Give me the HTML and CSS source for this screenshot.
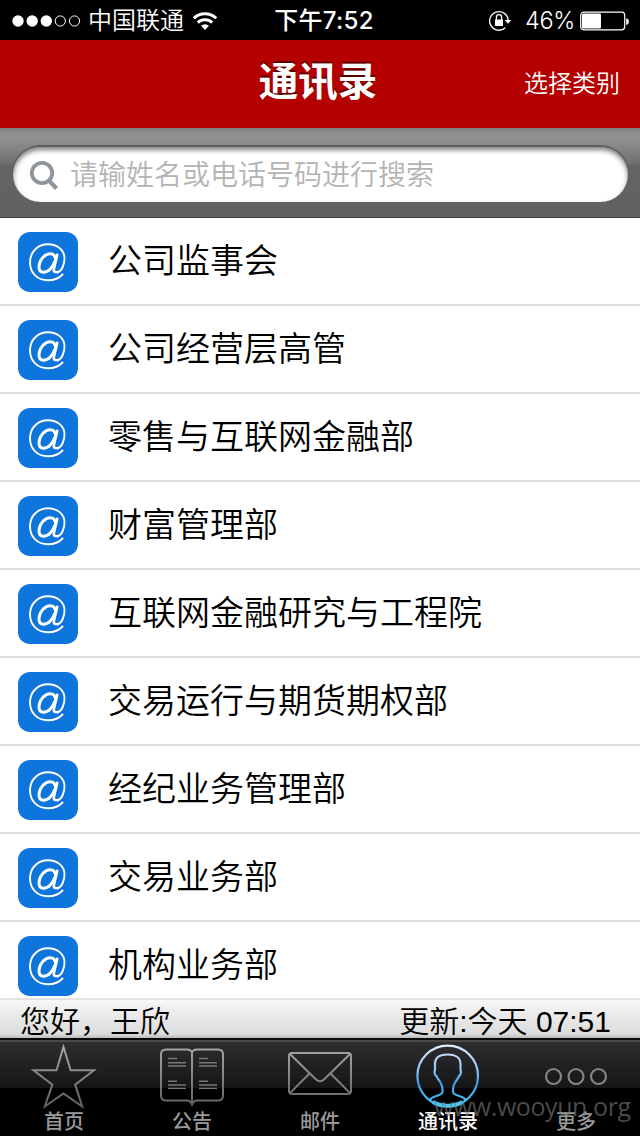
FILE: index.html
```html
<!DOCTYPE html>
<html lang="zh-CN">
<head>
    <meta charset="UTF-8">
    <meta name="viewport" content="width=device-width, initial-scale=1.0">
    <title>通讯录</title>
    <link rel="stylesheet" href="styles.css">
</head>
<body>
    <!-- 公用图标和渐变 -->
    <svg class="defs" width="0" height="0">
        <defs>
            <linearGradient id="gray" gradientUnits="userSpaceOnUse" x1="0" y1="0" x2="0" y2="66">
                <stop offset="0" stop-color="#aaa"/>
                <stop offset="1" stop-color="#5c5c5c"/>
            </linearGradient>
            <linearGradient id="blue" gradientUnits="userSpaceOnUse" x1="0" y1="0" x2="0" y2="66">
                <stop offset="0" stop-color="#e4edff"/>
                <stop offset="0.4" stop-color="#8fc3f8"/>
                <stop offset="0.6" stop-color="#3ba0ef"/>
                <stop offset="1" stop-color="#48d2fb"/>
            </linearGradient>
            <symbol id="at" viewBox="0 0 60 60">
                <g fill="none" stroke="#fff" stroke-linecap="round">
                    <path d="M44.5 42.5C41 46.500 35.500 48.300 30 48.300 19 48.300 12 40.500 12 30.500 12 20 19.500 12.300 30 12.300 40 12.300 46.500 18.500 46.500 26.500 46.500 33 43.500 39.500 39.500 40.200" stroke-width="1.900"/>
                    <path d="M39.500 40.200C36.500 40.500 35.300 39.500 36 36.500L39.200 22.800" stroke-width="2.700"/>
                    <path d="M37.500 27C37 23.500 35 21.800 32.500 21.800 26 21.800 21 29 21 35 21 38.500 22.500 40.300 25.500 40.300 30.500 40.300 35 35 36.500 30" stroke-width="3"/>
                </g>
            </symbol>
        </defs>
    </svg>

    <div class="status-bar">
        <div class="carrier">
            <svg class="signal" width="70" height="14" viewBox="0 0 70 14">
                <g fill="#fff">
                    <circle cx="6" cy="7" r="5.7"/>
                    <circle cx="20.2" cy="7" r="5.7"/>
                    <circle cx="34.3" cy="7" r="5.7"/>
                </g>
                <g fill="none" stroke="#fff">
                    <circle cx="48.3" cy="7" r="5.1"/>
                    <circle cx="62.5" cy="7" r="5.1"/>
                </g>
            </svg>
            <span class="carrier-name">中国联通</span>
            <svg class="wifi" width="26" height="20" viewBox="0 0 26 20">
                <g fill="none" stroke="#fff" stroke-width="3">
                    <path d="M1.8 7.2a16 16 0 0 1 22.4 0"/>
                    <path d="M5.8 11.6a10.5 10.5 0 0 1 14.4 0"/>
                </g>
                <path d="M13 19l-4-4.2a5.8 5.8 0 0 1 8 0z" fill="#fff"/>
            </svg>
        </div>
        <div class="clock">下午7:52</div>
        <div class="power">
            <svg width="24" height="22" viewBox="0 0 24 22">
                <path d="M20.2 10A9.3 9.3 0 1 0 17.3 17.7" fill="none" stroke="#fff" stroke-width="1.3"/>
                <path d="M16.6 10h6.8L20 13.8z" fill="#fff"/>
                <path d="M7 9.5h8V16H7z" fill="#fff"/>
                <path d="M8.4 10V7.3a2.6 2.6 0 0 1 5.2 0V10" fill="none" stroke="#fff" stroke-width="1.3"/>
            </svg>
            <span class="percent">46%</span>
            <svg width="50" height="20" viewBox="0 0 50 20">
                <rect x="0.7" y="1.2" width="44" height="17.6" rx="3" fill="none" stroke="#fff" stroke-width="1.2"/>
                <rect x="2" y="2.5" width="19" height="15" rx="1" fill="#fff"/>
                <path d="M46.2 7q2.8 1 2.8 3.5t-2.8 3.5z" fill="#fff"/>
            </svg>
        </div>
    </div>

    <header class="nav-bar">
        <h1>通讯录</h1>
        <a class="nav-action">选择类别</a>
    </header>

    <div class="search-bar">
        <div class="search-field">
            <svg width="30" height="32" viewBox="0 0 30 32">
                <circle cx="13" cy="13" r="10.2" fill="none" stroke="#8e959d" stroke-width="3.8"/>
                <path d="M19.5 20l8 8.5" stroke="#8e959d" stroke-width="4.2"/>
            </svg>
            <span>请输姓名或电话号码进行搜索</span>
        </div>
    </div>

    <ul class="contact-list">
        <li><svg class="at"><use href="#at"/></svg><span>公司监事会</span></li>
        <li><svg class="at"><use href="#at"/></svg><span>公司经营层高管</span></li>
        <li><svg class="at"><use href="#at"/></svg><span>零售与互联网金融部</span></li>
        <li><svg class="at"><use href="#at"/></svg><span>财富管理部</span></li>
        <li><svg class="at"><use href="#at"/></svg><span>互联网金融研究与工程院</span></li>
        <li><svg class="at"><use href="#at"/></svg><span>交易运行与期货期权部</span></li>
        <li><svg class="at"><use href="#at"/></svg><span>经纪业务管理部</span></li>
        <li><svg class="at"><use href="#at"/></svg><span>交易业务部</span></li>
        <li><svg class="at"><use href="#at"/></svg><span>机构业务部</span></li>
    </ul>

    <div class="info-bar">
        <span>您好，王欣</span>
        <span>更新:今天 07:51</span>
    </div>

    <nav class="tab-bar">
        <a class="tab">
            <svg width="68" height="66" viewBox="0 0 68 66">
                <path d="M33.5 3L40.6 26.2H64L45.2 40.6 52.2 62.5 33.5 49.5 14.8 62.5 22.3 40.6 3.5 26.2H26.5z" fill="none" stroke="url(#gray)" stroke-width="2"/>
            </svg>
            <span>首页</span>
        </a>
        <a class="tab">
            <svg width="68" height="66" viewBox="0 0 68 66">
                <path d="M34 8q-1.5-2.5-5-2.5H8q-5 0-5 5v41q0 5 5 5h21q3.5 0 5 4 1.5-4 5-4h21q5 0 5-5v-41q0-5-5-5H39q-3.5 0-5 2.5V60" fill="none" stroke="url(#gray)" stroke-width="2"/>
                <path d="M10 14.5h9M10 18.8h18M10 22h18M10 37.2h9M10 41h18M10 44.4h18M41 14.5h9M41 18.8h18M41 22h18M41 37.2h9M41 41h18M41 44.4h18" stroke="#777" stroke-width="1.4"/>
            </svg>
            <span>公告</span>
        </a>
        <a class="tab">
            <svg width="68" height="66" viewBox="0 0 68 66">
                <g fill="none" stroke="url(#gray)" stroke-width="2">
                    <rect x="3" y="9" width="62" height="41" rx="3"/>
                    <path d="M4 10l25.5 25q4.5 4.5 9 0L64 10M4 49l19-19M64 49l-19-19"/>
                </g>
            </svg>
            <span>邮件</span>
        </a>
        <a class="tab active">
            <svg width="68" height="66" viewBox="0 0 68 66">
                <g fill="none" stroke="url(#blue)" stroke-width="2.2">
                    <circle cx="33.7" cy="32" r="30.3"/>
                    <path d="M16 56c2-5 11-3 12.500-8 .5-4-1-8-3-11-1.500-2-2.500-3-3-5-2-1-2.500-4-1.500-6V20c0-7 6-9.500 12.700-9.500S46.500 13 46.500 20v6c1 2 .5 5-1.500 6-.5 2-1.500 3-3 5-2 3-3.500 7-3 11 1.500 5 10.500 3 12.500 8"/>
                    <path d="M19 58c8 5 21 5 29.500 0" stroke-width="4"/>
                </g>
            </svg>
            <span>通讯录</span>
        </a>
        <a class="tab">
            <svg width="68" height="66" viewBox="0 0 68 66">
                <g fill="none" stroke="#858585" stroke-width="2.2">
                    <circle cx="11.5" cy="32.5" r="7.5"/>
                    <circle cx="34" cy="32.5" r="7.5"/>
                    <circle cx="56.5" cy="32.5" r="7.5"/>
                </g>
            </svg>
            <span>更多</span>
        </a>
    </nav>

    <svg class="watermark" width="204" height="42" viewBox="0 0 204 42">
        <text x="1" y="27" textLength="197">www.wooyun.org</text>
    </svg>
</body>
</html>
```

FILE: styles.css
```css
* {
    box-sizing: border-box;
}

body {
    margin: 0;
    width: 640px;
    height: 1136px;
    display: flex;
    flex-direction: column;
    position: relative;
    overflow: hidden;
    background: #fff;
    color: #000;
    font-family: 'Liberation Sans', 'Noto Sans CJK SC', sans-serif;
}

svg {
    display: block;
    flex: none;
}

.defs {
    position: absolute;
}

.status-bar {
    height: 40px;
    flex: none;
    display: grid;
    grid-template-columns: 1fr auto 1fr;
    align-items: center;
    padding: 0 11px 0 12px;
    background: #000;
    color: #fff;
    font-family: Inter, 'Noto Sans CJK SC', sans-serif;
    font-size: 24px;
    line-height: 42px;
}

.carrier,
.power {
    display: flex;
    align-items: center;
}

.carrier-name {
    margin: 0 8px 0 6px;
    font-weight: 350;
}

.clock {
    padding-left: 7px;
    font-weight: 500;
    letter-spacing: 0.3px;
}

.power {
    justify-content: flex-end;
    margin-right: -1px;
}

.percent {
    margin: 0 5px 0 13px;
    font-size: 23.5px;
    font-weight: 350;
    letter-spacing: -0.3px;
}

.nav-bar {
    height: 88px;
    flex: none;
    display: grid;
    grid-template-columns: 1fr auto 1fr;
    align-items: center;
    padding: 0 20px;
    background: #b50000;
    color: #fff;
}

.nav-bar h1 {
    grid-column: 2;
    margin: 0;
    padding: 0 4px 4px 0;
    font-size: 39.5px;
    font-weight: bold;
    line-height: 56px;
    text-shadow: 0 -2px 0 rgba(0, 0, 0, 0.5);
}

.nav-action {
    justify-self: end;
    padding-bottom: 5px;
    font-size: 24px;
    font-weight: 350;
}

.search-bar {
    height: 90px;
    flex: none;
    padding: 19px 12px 15px 13px;
    background: linear-gradient(#7e7e7e 0, #919191 6px, #8c8c8c 14px, #6e6e6e 36px, #646464 37px, #616161 100%);
    border-bottom: 1px solid #404040;
}

.search-field {
    height: 55px;
    display: flex;
    align-items: center;
    padding: 2px 0 0 16px;
    border-radius: 28px;
    background: #fff;
    box-shadow: 0 -1px 0 1px #5f5f5f, inset 0 3px 5px rgba(0, 0, 0, 0.5);
    color: #b3b3b3;
    font-size: 28px;
    font-weight: 350;
}

.search-field span {
    margin: -5px 0 0 11px;
}

.contact-list {
    flex: 1;
    min-height: 0;
    margin: 0;
    padding: 0;
    overflow: hidden;
    list-style: none;
}

.contact-list li {
    height: 88px;
    display: flex;
    align-items: center;
    padding-left: 18px;
    border-bottom: 2px solid #dedede;
    font-size: 34px;
    font-weight: 350;
}

.contact-list span {
    margin: -5px 0 0 30px;
}

.at {
    width: 60px;
    height: 60px;
    margin-top: 2px;
    border-radius: 12px;
    background: #0d75dc;
}

.info-bar {
    height: 40px;
    flex: none;
    display: flex;
    justify-content: space-between;
    padding: 0 29px 0 20px;
    border-top: 2px solid #e2e2e2;
    background: linear-gradient(#f8f8f8, #eee 10px, #dcdcdc 34px, #bbb);
    font-size: 30px;
    font-weight: 350;
    line-height: 43px;
}

.tab-bar {
    height: 98px;
    flex: none;
    display: flex;
    border-top: 2px solid #0a0a0a;
    background: linear-gradient(#4a4a4a 0, #4a4a4a 2px, #2e2e2e 2px, #151515 48px, #000 48px);
}

.tab {
    flex: 1;
    display: flex;
    flex-direction: column;
    align-items: center;
    padding-top: 4px;
    color: #999;
    font-size: 20px;
    font-weight: 500;
    line-height: 24px;
}

.active {
    color: #fff;
}

.watermark {
    position: absolute;
    left: 433px;
    top: 1089px;
    fill: rgba(125, 125, 125, 0.6);
    font-family: 'Open Sans', sans-serif;
    font-size: 25px;
}
```
